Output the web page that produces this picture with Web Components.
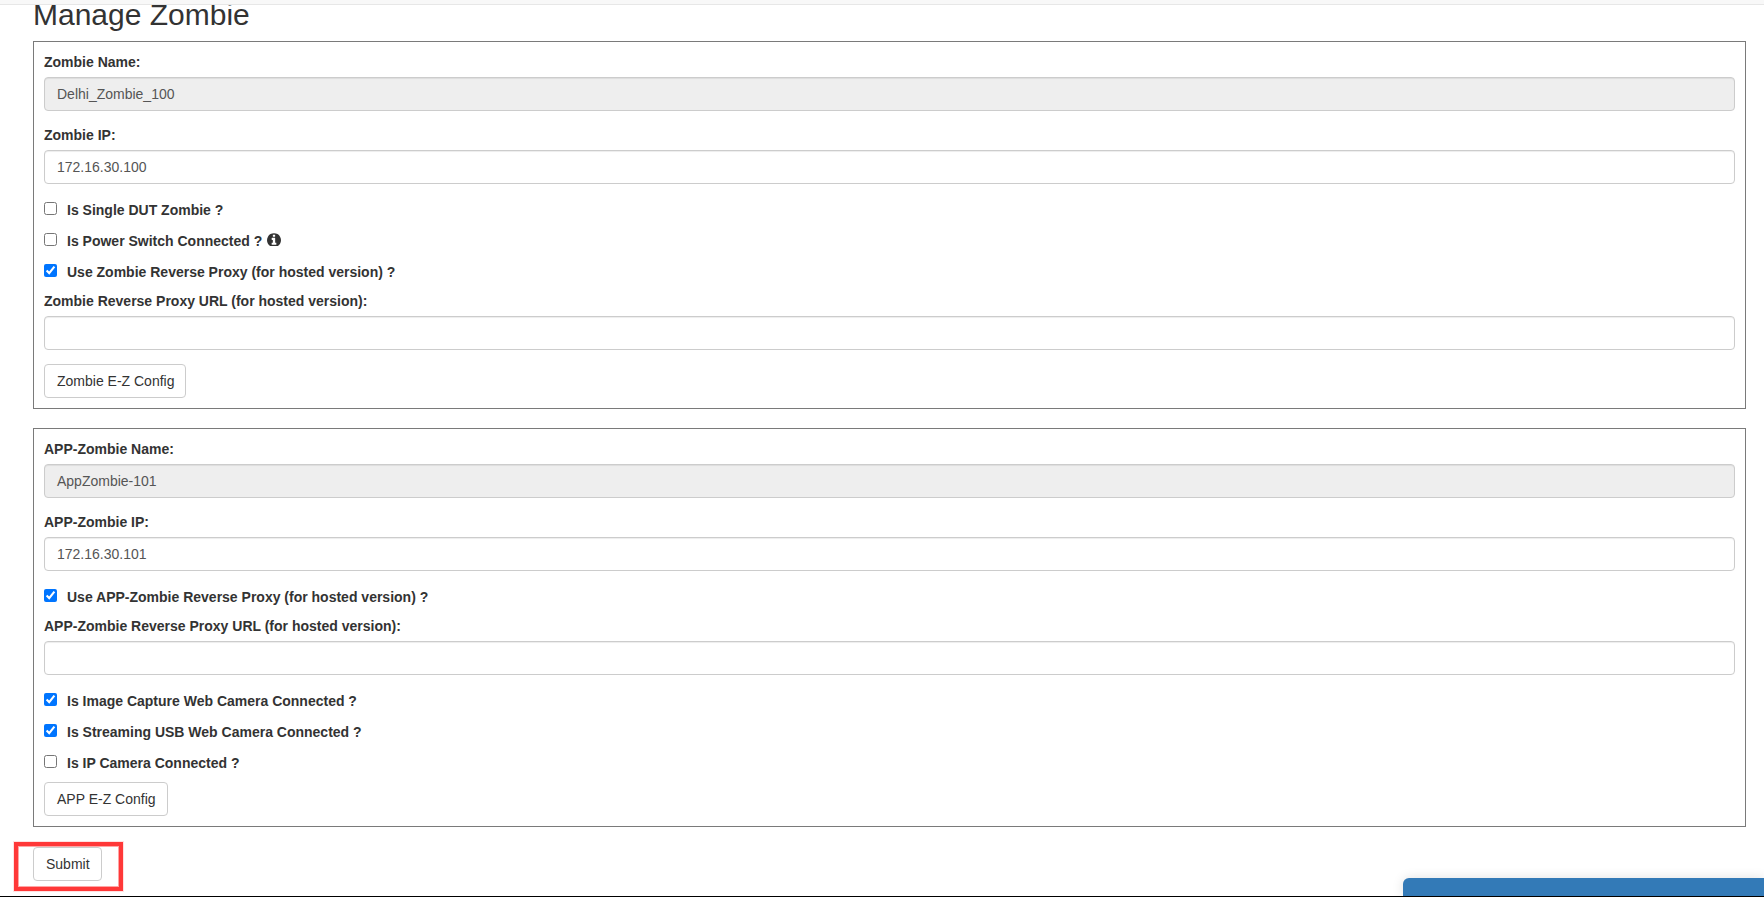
<!DOCTYPE html>
<html>
<head>
<meta charset="utf-8">
<title>Manage Zombie</title>
<style>
  html, body { margin: 0; height: 100%; overflow: hidden; background: #fff; }
  body { font: 14px/20px "Liberation Sans", Arial, sans-serif; color: #333; }
</style>
</head>
<body>
<manage-zombie-page>
  <zombie-box>
    <form-field label="Zombie Name:" disabled>Delhi_Zombie_100</form-field>
    <form-field label="Zombie IP:">172.16.30.100</form-field>
    <check-group>
      <check-row>Is Single DUT Zombie ?</check-row>
      <check-row info>Is Power Switch Connected ?</check-row>
      <check-row checked>Use Zombie Reverse Proxy (for hosted version) ?</check-row>
    </check-group>
    <form-field label="Zombie Reverse Proxy URL (for hosted version):"></form-field>
    <plain-button>Zombie E-Z Config</plain-button>
  </zombie-box>
  <zombie-box>
    <form-field label="APP-Zombie Name:" disabled>AppZombie-101</form-field>
    <form-field label="APP-Zombie IP:">172.16.30.101</form-field>
    <check-group>
      <check-row checked>Use APP-Zombie Reverse Proxy (for hosted version) ?</check-row>
    </check-group>
    <form-field label="APP-Zombie Reverse Proxy URL (for hosted version):"></form-field>
    <check-group>
      <check-row checked>Is Image Capture Web Camera Connected ?</check-row>
      <check-row checked>Is Streaming USB Web Camera Connected ?</check-row>
      <check-row>Is IP Camera Connected ?</check-row>
    </check-group>
    <plain-button>APP E-Z Config</plain-button>
  </zombie-box>
  <plain-button slot="submit" marked>Submit</plain-button>
</manage-zombie-page>

<script>
class ManageZombiePage extends HTMLElement {
    constructor(){
        super();
        const shadowRoot = this.attachShadow({ mode: 'open'});
        shadowRoot.innerHTML = `
        <style>
         :host{ display:block; position:relative; height:898px; overflow:hidden; box-sizing:border-box; padding:0 18px 0 33px; }
         h2{ font-size:30px; font-weight:500; line-height:33px; margin:-2px 0 10px; }
         #topbar{ position:absolute; top:0; left:0; right:0; height:4px; background:#f8f8f8; border-bottom:1px solid #e7e7e7; }
         #submit{ margin-top:20px; display:flex; }
         #chat{ position:absolute; left:1403px; right:0; top:878px; height:18px; background:#337ab7; border-radius:6px 0 0 0; box-shadow:0 0 12px rgba(0,0,0,.12); }
         #edge{ position:absolute; left:0; right:0; bottom:1px; height:1px; background:#000; }
         #below{ position:absolute; left:0; right:0; bottom:0; height:1px; background:#fff; }
        </style>
        <div id="topbar"></div>
        <h2>Manage Zombie</h2>
        <slot></slot>
        <div id="submit"><slot name="submit"></slot></div>
        <div id="chat"></div>
        <div id="edge"></div>
        <div id="below"></div>
        `;
    }
}

class ZombieBox extends HTMLElement {
    constructor(){
        super();
        const shadowRoot = this.attachShadow({ mode: 'open'});
        shadowRoot.innerHTML = `
        <style>
         :host{ display:block; border:1px solid #7a7a7a; padding:10px; margin-bottom:19px; }
        </style>
        <slot></slot>
        `;
    }
}

class FormField extends HTMLElement {
    constructor(){
        super();
        const shadowRoot = this.attachShadow({ mode: 'open'});
        shadowRoot.innerHTML = `
        <style>
         :host{ display:block; margin-bottom:14px; }
         label{ display:block; font-weight:700; margin-bottom:5px; }
         #control{
            box-sizing:border-box;
            height:34px;
            padding:6px 12px;
            color:#555;
            background:#fff;
            border:1px solid #ccc;
            border-radius:4px;
            box-shadow:inset 0 1px 1px rgba(0,0,0,.075);
         }
         :host([disabled]) #control{ background:#eee; }
        </style>
        <label></label>
        <div id="control"><slot></slot></div>
        `;
        shadowRoot.querySelector('label').textContent = this.getAttribute("label");
    }
}

class CheckGroup extends HTMLElement {
    constructor(){
        super();
        const shadowRoot = this.attachShadow({ mode: 'open'});
        shadowRoot.innerHTML = `
        <style>
         :host{ display:grid; row-gap:11px; margin:15px 0 10px; }
        </style>
        <slot></slot>
        `;
    }
}

class CheckRow extends HTMLElement {
    constructor(){
        super();
        const shadowRoot = this.attachShadow({ mode: 'open'});
        const checked = this.hasAttribute("checked") ? "checked" : "";
        const info = this.hasAttribute("info") ? `
            <svg viewBox="0 0 1536 1536" width="14" height="14" fill="#333" fill-rule="evenodd">
              <path d="M1024 1376v-160q0-14-9-23t-23-9h-96v-512q0-14-9-23t-23-9h-320q-14 0-23 9t-9 23v160q0 14 9 23t23 9h96v320h-96q-14 0-23 9t-9 23v160q0 14 9 23t23 9h448q14 0 23-9t9-23zm-128-896v-160q0-14-9-23t-23-9h-192q-14 0-23 9t-9 23v160q0 14 9 23t23 9h192q14 0 23-9t9-23zm640 416q0 209-103 385.5t-279.5 279.5-385.5 103-385.5-103-279.5-279.5-103-385.5 103-385.5 279.5-279.5 385.5-103 385.5 103 279.5 279.5 103 385.5z"/>
            </svg>` : "";
        shadowRoot.innerHTML = `
        <style>
         :host{ display:flex; align-items:flex-start; height:20px; font-weight:700; }
         input{ width:13px; height:13px; margin:3px 10px 0 0; }
         span{ padding-top:1px; }
         svg{ margin:2px 0 0 5px; }
        </style>
        <input type="checkbox" ${checked}>
        <span><slot></slot></span>
        ${info}
        `;
    }
}

class PlainButton extends HTMLElement {
    constructor(){
        super();
        const shadowRoot = this.attachShadow({ mode: 'open'});
        shadowRoot.innerHTML = `
        <style>
         :host{ display:block; width:fit-content; position:relative; }
         button{
            display:block;
            box-sizing:border-box;
            height:34px;
            padding:6px 11px 6px 12px;
            font:inherit;
            color:#333;
            background:#fff;
            border:1px solid #ccc;
            border-radius:4px;
         }
         #mark{
            position:absolute; left:-19px; top:-5px; width:100.5px; height:41px;
            border:4px solid #ff3838; display:none;
            box-shadow:inset 0 0 0 1px rgba(255,56,56,.45), 0 0 0 1px rgba(255,56,56,.15);
         }
         :host([marked]) #mark{ display:block; }
        </style>
        <button><slot></slot></button>
        <div id="mark"></div>
        `;
    }
}

window.customElements.define('manage-zombie-page', ManageZombiePage);
window.customElements.define('zombie-box', ZombieBox);
window.customElements.define('form-field', FormField);
window.customElements.define('check-group', CheckGroup);
window.customElements.define('check-row', CheckRow);
window.customElements.define('plain-button', PlainButton);
</script>
</body>
</html>
